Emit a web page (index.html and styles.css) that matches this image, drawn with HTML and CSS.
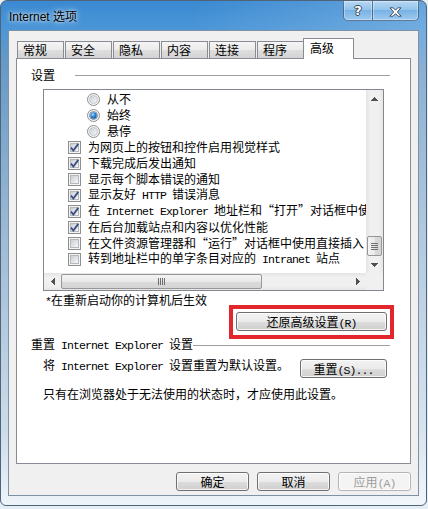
FILE: index.html
```html
<!DOCTYPE html>
<html lang="zh-CN">
<head>
    <meta charset="UTF-8">
    <meta name="viewport" content="width=device-width, initial-scale=1.0">
    <title>Internet 选项</title>

    <link rel="stylesheet" href="styles.css">
</head>
<body>
    <svg class="defs" aria-hidden="true">
        <defs>
            <linearGradient id="boxfill" x1="0" y1="0" x2="1" y2="1">
                <stop offset="0" stop-color="#c9cdd3"/>
                <stop offset="1" stop-color="#f8f8f8"/>
            </linearGradient>
            <radialGradient id="dot" cx="0.4" cy="0.35" r="0.75">
                <stop offset="0" stop-color="#b4defc"/>
                <stop offset="0.45" stop-color="#2f88d8"/>
                <stop offset="1" stop-color="#174b8c"/>
            </radialGradient>
            <symbol id="cb" viewBox="0 0 13 13">
                <rect x="0.5" y="0.5" width="12" height="12" fill="#f5f5f5" stroke="#8f8f8f"/>
                <rect x="2.5" y="2.5" width="8" height="8" fill="url(#boxfill)" stroke="#b4b8bd"/>
            </symbol>
            <symbol id="cb-on" viewBox="0 0 13 13">
                <rect x="0.5" y="0.5" width="12" height="12" fill="#f5f5f5" stroke="#8f8f8f"/>
                <rect x="2.5" y="2.5" width="8" height="8" fill="url(#boxfill)" stroke="#b4b8bd"/>
                <path d="M3 6.6l2.4 2.9 4.9-6.6" fill="none" stroke="#3b4f86" stroke-width="1.8"/>
            </symbol>
            <symbol id="rd" viewBox="0 0 13 13">
                <circle cx="6.5" cy="6.5" r="6" fill="#f5f5f5" stroke="#8f8f8f"/>
                <circle cx="6.5" cy="6.5" r="4" fill="url(#boxfill)" stroke="#babec3" stroke-width="0.8"/>
            </symbol>
            <symbol id="rd-on" viewBox="0 0 13 13">
                <circle cx="6.5" cy="6.5" r="6" fill="#f5f5f5" stroke="#8f8f8f"/>
                <circle cx="6.5" cy="6.5" r="4" fill="#e2e6ea" stroke="#6d7f95" stroke-width="0.8"/>
                <circle cx="6.5" cy="6.5" r="3.2" fill="url(#dot)"/>
            </symbol>
        </defs>
    </svg>

    <div class="window">
        <div class="titlebar">
            <span class="title">Internet 选项</span>
            <div class="caption">
                <div class="cbtn help">?</div>
                <div class="cbtn close">
                    <svg width="13" height="10" viewBox="0 0 13 10">
                        <path d="M1 0.8h3.2l2.3 2.4 2.3-2.4H12L8.3 5l3.9 4.2H9L6.5 6.6 4 9.2H0.8L4.7 5z" fill="#fff" stroke="#3b4656" stroke-width="0.9"/>
                    </svg>
                </div>
            </div>
        </div>

        <div class="client">
            <div class="tabs">
                <div class="tab">常规</div>
                <div class="tab">安全</div>
                <div class="tab">隐私</div>
                <div class="tab">内容</div>
                <div class="tab">连接</div>
                <div class="tab">程序</div>
                <div class="tab active">高级</div>
            </div>

            <div class="panel">
                <div class="group-head">
                    <span>设置</span>
                    <span class="rule gap"></span>
                </div>

                <div class="listbox">
                    <div class="items">
                        <div class="item sub"><svg class="ctl"><use href="#rd"/></svg><span>从不</span></div>
                        <div class="item sub"><svg class="ctl"><use href="#rd-on"/></svg><span>始终</span></div>
                        <div class="item sub"><svg class="ctl"><use href="#rd"/></svg><span>悬停</span></div>
                        <div class="item"><svg class="ctl"><use href="#cb-on"/></svg><span>为网页上的按钮和控件启用视觉样式</span></div>
                        <div class="item"><svg class="ctl"><use href="#cb-on"/></svg><span>下载完成后发出通知</span></div>
                        <div class="item"><svg class="ctl"><use href="#cb"/></svg><span>显示每个脚本错误的通知</span></div>
                        <div class="item"><svg class="ctl"><use href="#cb-on"/></svg><span>显示友好<span class="en"> HTTP </span>错误消息</span></div>
                        <div class="item"><svg class="ctl"><use href="#cb-on"/></svg><span>在<span class="en"> Internet Explorer </span>地址栏和<span class="ql">“</span>打开<span class="qr">”</span>对话框中使用直接插入</span></div>
                        <div class="item"><svg class="ctl"><use href="#cb-on"/></svg><span>在后台加载站点和内容以优化性能</span></div>
                        <div class="item"><svg class="ctl"><use href="#cb"/></svg><span>在文件资源管理器和<span class="ql">“</span>运行<span class="qr">”</span>对话框中使用直接插入</span></div>
                        <div class="item"><svg class="ctl"><use href="#cb"/></svg><span>转到地址栏中的单字条目对应的<span class="en"> Intranet </span>站点</span></div>
                    </div>

                    <div class="vscroll">
                        <div class="sbtn"><svg width="7" height="4"><path d="M3 0h1v1h1v1h1v1h1v1H0V3h1V2h1V1h1z" fill="#505050"/></svg></div>
                        <div class="vtrack">
                            <div class="vthumb">
                                <svg width="7" height="7"><path d="M0 0h7v1H0zM0 2h7v1H0zM0 4h7v1H0zM0 6h7v1H0z" fill="#6e6e6e"/></svg>
                            </div>
                        </div>
                        <div class="sbtn"><svg width="7" height="4"><path d="M0 0h7v1H6v1H5v1H4v1H3V3H2V2H1V1H0z" fill="#505050"/></svg></div>
                    </div>

                    <div class="hscroll">
                        <div class="sbtn"><svg width="4" height="7"><path d="M0 3h1V2h1V1h1V0h1v7H3V6H2V5H1V4H0z" fill="#505050"/></svg></div>
                        <div class="htrack">
                            <div class="hthumb">
                                <svg width="7" height="7"><path d="M0 0h1v7H0zM2 0h1v7H2zM4 0h1v7H4zM6 0h1v7H6z" fill="#6e6e6e"/></svg>
                            </div>
                        </div>
                        <div class="sbtn"><svg width="4" height="7"><path d="M0 0h1v1h1v1h1v1h1v1H3v1H2v1H1v1H0z" fill="#505050"/></svg></div>
                    </div>

                    <div class="corner"></div>
                </div>

                <div class="hint"><span class="en">*</span>在重新启动你的计算机后生效</div>

                <div class="restore-row">
                    <div class="mark">
                        <button class="btn restore">还原高级设置<span class="en">(R)</span></button>
                    </div>
                </div>

                <div class="group-head reset-head">
                    <span>重置<span class="en"> Internet Explorer </span>设置</span>
                    <span class="rule"></span>
                </div>

                <div class="reset-row">
                    <span>将<span class="en"> Internet Explorer </span>设置重置为默认设置。</span>
                    <button class="btn reset">重置<span class="en">(S)...</span></button>
                </div>

                <div class="note">只有在浏览器处于无法使用的状态时，才应使用此设置。</div>
            </div>

            <div class="footer">
                <button class="btn">确定</button>
                <button class="btn">取消</button>
                <button class="btn" disabled>应用<span class="en">(A)</span></button>
            </div>
        </div>
    </div>
</body>
</html>
```

FILE: styles.css
```css
*{
    box-sizing: border-box;
}

body{
    margin: 0;
    background-color: #e6eef5;
    font-family: "Noto Sans CJK SC", sans-serif;
    font-size: 12px;
    line-height: 16px;
    color: #000;
}

.defs{
    display: block;
    width: 0;
    height: 0;
}

.en{
    font-family: "Liberation Mono", monospace;
    font-size: 11.5px;
    letter-spacing: -0.9px;
    white-space: pre;
}

.ql, .qr{
    display: inline-block;
    width: 12px;
}

.ql{
    text-align: right;
}

.qr{
    text-align: left;
}

/* window frame */

.window{
    width: 427px;
    height: 506px;
    padding: 0 7px 8px 7px;
    border: 1px solid #4f6478;
    border-radius: 7px 7px 6px 6px;
    background:
        linear-gradient(to right, rgba(255,255,255,0) 45%, rgba(255,255,255,0.22) 100%),
        linear-gradient(#3a89d2 0, #4b96d7 28px, #6699c6 60px, #9fbbd5 240px, #cddcea 430px, #eef4fa 100%);
}

.titlebar{
    height: 29px;
    display: flex;
    justify-content: space-between;
    align-items: flex-start;
}

.title{
    padding: 9px 0 0 1px;
    font-family: "Liberation Sans", "Noto Sans CJK SC", sans-serif;
    font-size: 12px;
    line-height: 14px;
    text-shadow: 0 0 6px rgba(255,255,255,0.9), 0 0 3px rgba(255,255,255,0.7);
}

.caption{
    display: flex;
}

.cbtn{
    height: 20px;
    display: flex;
    align-items: center;
    justify-content: center;
    border: 1px solid rgba(25,45,75,0.55);
    border-top: none;
    background: linear-gradient(#b9d8f3, #92c3ec 45%, #79b2e4 50%, #9ccaf0);
    box-shadow: inset 0 0 0 1px rgba(255,255,255,0.35);
}

.help{
    width: 29px;
    border-right: none;
    border-radius: 0 0 0 5px;
    font-family: "DejaVu Sans", sans-serif;
    font-weight: bold;
    font-size: 13px;
    color: #fff;
    text-shadow: 1px 0 0 #3b4656, -1px 0 0 #3b4656, 0 1px 0 #3b4656, 0 -1px 0 #3b4656;
}

.close{
    width: 47px;
    border-radius: 0 0 5px 0;
    padding-top: 2px;
}

/* client area */

.client{
    width: 411px;
    height: 466px;
    padding: 7px 0 0 7px;
    border: 1px solid #7f91a4;
    background-color: #f0f0f0;
}

.tabs{
    display: flex;
    align-items: flex-end;
    gap: 1px;
    height: 20px;
    margin-left: 1px;
}

.tab{
    width: 47px;
    height: 17px;
    padding-left: 5px;
    border: 1px solid #898c95;
    border-bottom: none;
    background: linear-gradient(#f5f5f5, #ebebeb 50%, #dedede 51%, #d3d3d3);
}

.tab.active{
    position: relative;
    z-index: 1;
    width: 51px;
    height: 21px;
    margin-left: -2px;
    margin-bottom: -1px;
    padding: 1px 0 0 6px;
    background: #fff;
}

.panel{
    width: 395px;
    height: 406px;
    border: 1px solid #898c95;
    background-color: #fff;
}

.group-head{
    display: flex;
    align-items: center;
    margin: 8px 20px 0 14px;
    white-space: nowrap;
}

.rule{
    flex: 1;
    height: 1px;
    background-color: #a0a0a0;
}

.rule.gap{
    margin-left: 20px;
}

/* settings list */

.listbox{
    display: grid;
    grid-template-columns: 1fr 17px;
    grid-template-rows: 1fr 17px;
    width: 341px;
    height: 202px;
    margin: 6px 0 0 26px;
    border: 1px solid #828790;
}

.items{
    overflow: hidden;
    padding-top: 1px;
}

.item{
    display: flex;
    align-items: center;
    gap: 7px;
    height: 16px;
    padding-left: 24px;
    white-space: nowrap;
}

.item.sub{
    padding-left: 43px;
}

.ctl{
    width: 13px;
    height: 13px;
    flex: none;
}

.vscroll{
    display: flex;
    flex-direction: column;
    background: linear-gradient(to right, #e4e4e4, #f0f0f0 25%, #f0f0f0 75%, #e6e6e6);
}

.sbtn{
    width: 17px;
    height: 17px;
    flex: none;
    display: flex;
    align-items: center;
    justify-content: center;
}

.vtrack{
    flex: 1;
    display: flex;
    flex-direction: column;
    justify-content: flex-end;
}

.vthumb{
    height: 20px;
    margin: 0 1px;
    display: flex;
    align-items: center;
    justify-content: center;
    border: 1px solid #979797;
    border-radius: 2px;
    background: linear-gradient(to right, #f4f4f4, #e9e9e9 50%, #d9d9d9 51%, #d5d5d5);
}

.hscroll{
    display: flex;
    background: linear-gradient(#e4e4e4, #f0f0f0 25%, #f0f0f0 75%, #e6e6e6);
}

.htrack{
    flex: 1;
    display: flex;
}

.hthumb{
    width: 201px;
    margin: 1px 0;
    display: flex;
    align-items: center;
    justify-content: center;
    border: 1px solid #979797;
    border-radius: 2px;
    background: linear-gradient(#f4f4f4, #e9e9e9 50%, #d9d9d9 51%, #d5d5d5);
}

.corner{
    background-color: #f0f0f0;
}

.hint{
    margin: 1px 0 0 28px;
}

/* buttons */

.btn{
    height: 19px;
    padding: 0;
    font: inherit;
    line-height: 17px;
    color: #000;
    border: 1px solid #707070;
    border-radius: 3px;
    background: linear-gradient(#f2f2f2, #ebebeb 50%, #dddddd 51%, #cfcfcf);
    box-shadow: inset 0 0 0 1px rgba(255,255,255,0.75);
}

.btn:disabled{
    color: #9d9d9d;
    border-color: #b5b5b5;
    background: #f4f4f4;
}

.restore-row{
    display: flex;
    justify-content: flex-end;
    margin: 2px 23px 0 0;
}

.mark{
    position: relative;
}

/* red annotation frame drawn over the button */
.mark::after{
    content: "";
    position: absolute;
    top: -7px;
    right: -7px;
    bottom: -8px;
    left: -7px;
    border: 4px solid #e3262b;
}

.restore{
    width: 151px;
}

.reset-head{
    margin-top: 5px;
}

.reset-row{
    display: flex;
    justify-content: space-between;
    align-items: flex-start;
    margin: 3px 23px 0 26px;
    white-space: nowrap;
}

.reset{
    width: 87px;
    margin-top: 2px;
}

.note{
    margin: 8px 0 0 26px;
}

.footer{
    display: flex;
    justify-content: flex-end;
    gap: 8px;
    width: 395px;
    margin-top: 8px;
}

.footer .btn{
    width: 73px;
}
```
